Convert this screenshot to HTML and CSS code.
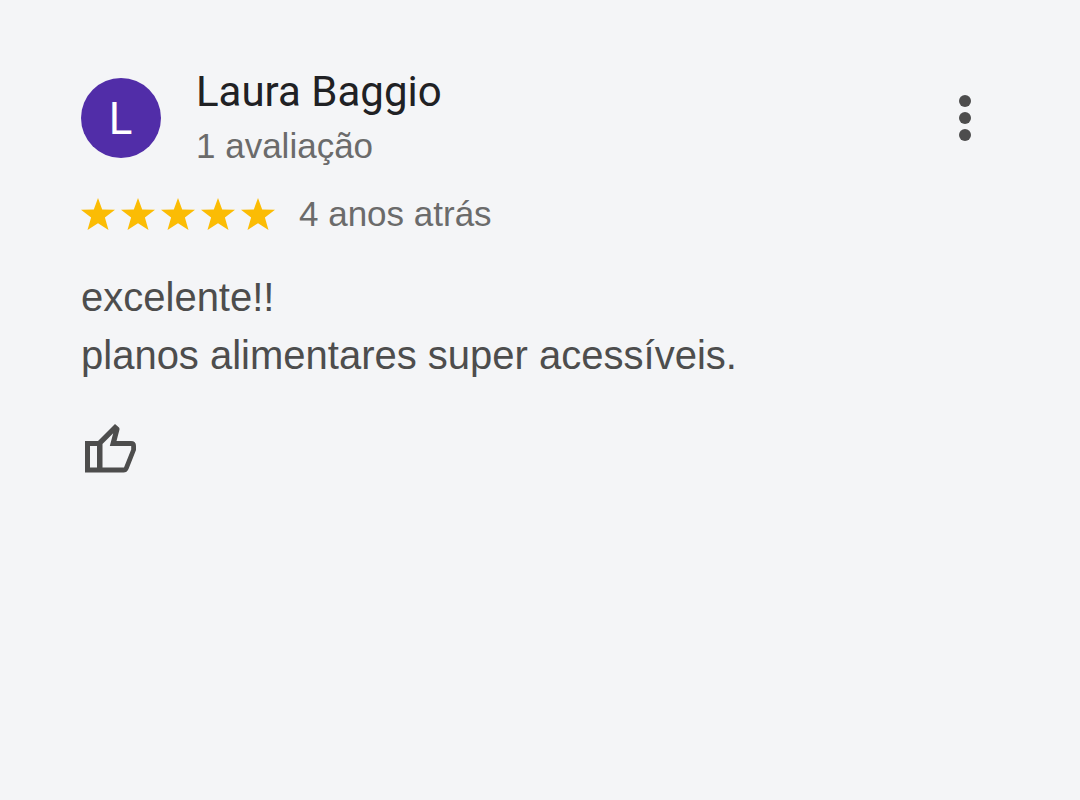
FILE: index.html
```html
<!DOCTYPE html>
<html lang="pt-BR">

<head>
    <meta charset="UTF-8">
    <meta name="viewport" content="width=device-width, initial-scale=1.0">
    <title>Laura Baggio</title>
    <link rel="stylesheet" href="styles.css">
</head>

<body>
    <article class="review">
        <header class="review-header">
            <div class="avatar" aria-hidden="true">L</div>
            <div class="author">
                <h1 class="author-name">Laura Baggio</h1>
                <p class="author-info">1 avaliação</p>
            </div>
            <button class="menu-btn" type="button" aria-label="Mais opções">
                <svg width="12" height="48" viewBox="0 0 12 48">
                    <circle cx="6" cy="7" r="6" />
                    <circle cx="6" cy="24" r="6" />
                    <circle cx="6" cy="41" r="6" />
                </svg>
            </button>
        </header>

        <div class="rating">
            <div class="stars" role="img" aria-label="5 estrelas">
                <svg class="star" viewBox="0 0 34 32"><path d="M17 0l4.200 11.400 12.800.4-10.100 7.800 3.600 12.400L17 25.200 6.500 32l3.600-12.400L0 11.800l12.800-.4z" /></svg>
                <svg class="star" viewBox="0 0 34 32"><path d="M17 0l4.200 11.400 12.800.4-10.100 7.800 3.600 12.400L17 25.200 6.500 32l3.600-12.400L0 11.800l12.800-.4z" /></svg>
                <svg class="star" viewBox="0 0 34 32"><path d="M17 0l4.200 11.400 12.800.4-10.100 7.800 3.600 12.400L17 25.200 6.500 32l3.600-12.400L0 11.800l12.800-.4z" /></svg>
                <svg class="star" viewBox="0 0 34 32"><path d="M17 0l4.200 11.400 12.800.4-10.100 7.800 3.600 12.400L17 25.200 6.500 32l3.600-12.400L0 11.800l12.800-.4z" /></svg>
                <svg class="star" viewBox="0 0 34 32"><path d="M17 0l4.200 11.400 12.800.4-10.100 7.800 3.600 12.400L17 25.200 6.500 32l3.600-12.400L0 11.800l12.800-.4z" /></svg>
            </div>
            <span class="date">4 anos atrás</span>
        </div>

        <p class="review-text">excelente!!<br>planos alimentares super acessíveis.</p>

        <button class="like-btn" type="button" aria-label="Gostei">
            <svg width="52" height="50" viewBox="0 0 52 50">
                <path fill-rule="evenodd" d="M0 17H13L30 0 34 3.500Q34.700 4.300 34.500 5.500L31.500 17H46Q51 17 51 22V26L43.500 45Q42 48.500 38.500 48.500H0zM5 22V43.500H12V22zM17.500 20V43.500H39L46.200 25.500V22H24.800L28.200 9.300z" />
            </svg>
        </button>
    </article>
</body>

</html>
```

FILE: styles.css
```css
* {
    box-sizing: border-box;
}

body {
    margin: 0;
    background-color: #f4f5f7;
    color: #4d4d4d;
    font-family: "Liberation Sans", Arial, sans-serif;
}

.review {
    padding: 66px 109px 40px 81px;
}

.review-header {
    display: flex;
    align-items: center;
}

.avatar {
    display: flex;
    justify-content: center;
    align-items: center;
    width: 80px;
    height: 80px;
    border-radius: 50%;
    background-color: #512da8;
    color: #fff;
    font-family: Inter, sans-serif;
    font-size: 44px;
}

.author {
    flex: 1;
    margin-left: 35px;
}

.author-name {
    margin: 0;
    color: #202124;
    font-family: Roboto, sans-serif;
    font-size: 42px;
    font-weight: 400;
    line-height: 52px;
}

.author-info {
    margin: 4px 0 0;
    color: #6b6b6b;
    font-size: 35px;
    line-height: 48px;
}

.menu-btn,
.like-btn {
    padding: 0;
    border: 0;
    background: none;
    cursor: pointer;
}

.menu-btn svg,
.like-btn svg {
    display: block;
    fill: #4d4d4d;
}

.rating {
    display: flex;
    align-items: center;
    gap: 24px;
    margin-top: 20px;
}

.stars {
    display: flex;
    gap: 6px;
}

.star {
    width: 34px;
    height: 32px;
    fill: #fbbc04;
}

.date {
    color: #6b6b6b;
    font-size: 35px;
    line-height: 48px;
}

.review-text {
    margin: 30px 0 0;
    font-size: 40px;
    line-height: 58px;
}

.like-btn {
    margin: 40px 0 0 4px;
}
```
